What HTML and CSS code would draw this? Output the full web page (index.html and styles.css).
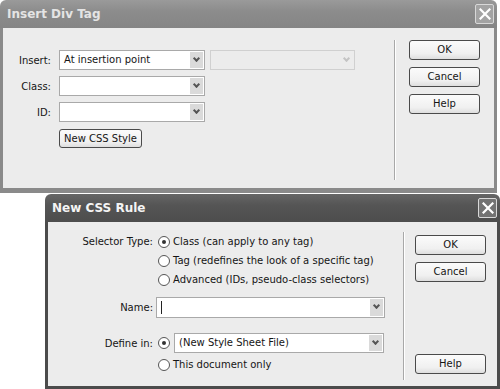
FILE: index.html
```html
<!DOCTYPE html>
<html>
<head>
    <title>Insert Div Tag</title>
    <link rel="stylesheet" href="styles.css">
</head>
<body>
    <div class="dialog" id="divDialog">
        <div class="titlebar">
            <span class="title">Insert Div Tag</span>
            <span class="close">
                <svg width="12" height="12" viewBox="0 0 12 12"><path d="M1.5 1.5 L10.5 10.5 M10.5 1.5 L1.5 10.5" stroke="#fff" stroke-width="2.2" stroke-linecap="square"/></svg>
            </span>
        </div>
        <div class="content">
            <div class="form">
                <div class="row">
                    <label>Insert:</label>
                    <div class="select">At insertion point<span class="arrow"></span></div>
                    <div class="select disabled"><span class="arrow"></span></div>
                </div>
                <div class="row">
                    <label>Class:</label>
                    <div class="select"><span class="arrow"></span></div>
                </div>
                <div class="row">
                    <label>ID:</label>
                    <div class="select"><span class="arrow"></span></div>
                </div>
                <div class="row">
                    <label></label>
                    <div class="button small">New CSS Style</div>
                </div>
            </div>
            <div class="separator"></div>
            <div class="buttons">
                <div class="button">OK</div>
                <div class="button">Cancel</div>
                <div class="button">Help</div>
            </div>
        </div>
    </div>

    <div class="dialog" id="ruleDialog">
        <div class="titlebar">
            <span class="title">New CSS Rule</span>
            <span class="close">
                <svg width="12" height="12" viewBox="0 0 12 12"><path d="M1.5 1.5 L10.5 10.5 M10.5 1.5 L1.5 10.5" stroke="#fff" stroke-width="2.2" stroke-linecap="square"/></svg>
            </span>
        </div>
        <div class="content">
            <div class="form">
                <label class="top">Selector Type:</label>
                <div class="radios">
                    <div class="radio-row"><span class="radio checked"></span>Class (can apply to any tag)</div>
                    <div class="radio-row"><span class="radio"></span>Tag (redefines the look of a specific tag)</div>
                    <div class="radio-row"><span class="radio"></span>Advanced (IDs, pseudo-class selectors)</div>
                </div>

                <label class="name-label">Name:</label>
                <div class="select name-input"><span class="caret"></span><span class="arrow"></span></div>

                <label class="define-label">Define in:</label>
                <div class="define-row">
                    <span class="radio checked"></span>
                    <div class="select define-select">(New Style Sheet File)<span class="arrow"></span></div>
                </div>

                <label></label>
                <div class="radio-row last"><span class="radio"></span>This document only</div>
            </div>
            <div class="separator"></div>
            <div class="buttons">
                <div class="button">OK</div>
                <div class="button">Cancel</div>
                <div class="button help">Help</div>
            </div>
        </div>
    </div>
</body>
</html>
```

FILE: styles.css
```css
body {
    margin: 0;
    width: 500px;
    height: 389px;
    overflow: hidden;
    position: relative;
    background: #fff;
    font-family: "DejaVu Sans", sans-serif;
    font-size: 10px;
    color: #151515;
}

/* windows */
.dialog {
    position: absolute;
    display: flex;
    flex-direction: column;
    box-sizing: border-box;
}

#divDialog {
    left: 0;
    top: 0;
    width: 497px;
    height: 193px;
}

#ruleDialog {
    left: 45px;
    top: 194px;
    width: 455px;
    height: 195px;
}

.titlebar {
    height: 28px;
    flex: none;
    display: flex;
    align-items: center;
    justify-content: space-between;
    padding: 0 7px;
    border-radius: 6px 6px 0 0;
}

#divDialog .titlebar {
    background: linear-gradient(#9a9a9a, #8c8c8c 40%, #858585);
}

#ruleDialog .titlebar {
    background: linear-gradient(#666, #555 40%, #4d4d4d);
}

.title {
    font-weight: bold;
    font-size: 12px;
    color: #e4e4e4;
}

#ruleDialog .title {
    color: #f4f4f4;
}

.close {
    width: 17px;
    height: 18px;
    display: flex;
    align-items: center;
    justify-content: center;
    border: 1px solid #d8d8d8;
    border-radius: 2px;
    margin-right: -4px;
}

#divDialog .close {
    background: #a3a3a3;
}

#ruleDialog .close {
    background: #737373;
}

.content {
    flex: 1;
    display: flex;
    background: #ececec;
    border: 3px solid #8a8a8a;
    border-top: 0;
}

#divDialog .content {
    border-bottom-width: 5px;
    padding: 12px 0 8px 0;
}

#ruleDialog .content {
    border-color: #4b4b4b;
    padding: 10px 0 6px 0;
}

.separator {
    width: 1px;
    border-left: 1px solid #a8a8a8;
    background: #fff;
}

.buttons {
    display: flex;
    flex-direction: column;
    gap: 7px;
}

#divDialog .buttons {
    margin-left: 13px;
}

#ruleDialog .buttons {
    margin-left: 10px;
    padding: 3px 0 6px 0;
}

.button {
    width: 69px;
    height: 18px;
    line-height: 18px;
    text-align: center;
    border: 1px solid #4a4a4a;
    border-radius: 3px;
    background: linear-gradient(#fbfbfb, #f0f0f0 70%, #dedede);
}

.button.small {
    width: auto;
    padding: 0 4px;
    height: 17px;
    line-height: 17px;
}

.help {
    margin-top: auto;
}

label {
    text-align: right;
}

/* select boxes */
.select {
    position: relative;
    box-sizing: border-box;
    height: 20px;
    line-height: 18px;
    padding-left: 4px;
    background: #fff;
    border: 1px solid #a9a9a9;
}

.arrow {
    position: absolute;
    right: 1px;
    top: 1px;
    bottom: 1px;
    width: 13px;
    background: #dadada;
}

.arrow::after {
    content: "";
    position: absolute;
    left: 4px;
    top: 4px;
    width: 3px;
    height: 3px;
    border-right: 2px solid #555;
    border-bottom: 2px solid #555;
    transform: rotate(45deg);
}

.select.disabled {
    background: #ececec;
    border-color: #d0d0d0;
}

.select.disabled .arrow {
    background: #ececec;
}

.select.disabled .arrow::after {
    border-color: #c4c4c4;
}

/* insert div form */
#divDialog .form {
    width: 391px;
    padding-top: 10px;
    display: flex;
    flex-direction: column;
    gap: 6px;
}

#divDialog .row {
    display: flex;
    align-items: center;
}

#divDialog .row label {
    width: 48px;
    margin-right: 8px;
}

#divDialog .row .select {
    width: 146px;
}

#divDialog .row .select.disabled {
    width: 145px;
    margin-left: 5px;
}

#divDialog .row .button {
    margin-top: 1px;
}

/* css rule form */
#ruleDialog .form {
    width: 355px;
    display: grid;
    grid-template-columns: 105px 228px;
    column-gap: 4px;
    align-items: center;
    align-content: start;
}

.top {
    align-self: start;
    line-height: 19px;
}

.radio-row {
    display: flex;
    align-items: center;
    height: 19px;
    gap: 3px;
    white-space: nowrap;
}

.radio {
    box-sizing: border-box;
    width: 12px;
    height: 12px;
    margin-left: 1px;
    border: 1px solid #555;
    border-radius: 50%;
    background: #fff;
    display: flex;
    align-items: center;
    justify-content: center;
    flex: none;
}

.radio.checked::after {
    content: "";
    width: 4px;
    height: 4px;
    border-radius: 50%;
    background: #333;
}

.name-label,
.name-input {
    margin-top: 8px;
}

.name-input {
    height: 21px;
    margin-left: -1px;
}

.caret {
    position: absolute;
    left: 4px;
    top: 3px;
    width: 1px;
    height: 13px;
    background: #222;
}

.define-label,
.define-row {
    margin-top: 15px;
}

.define-row {
    display: flex;
    align-items: center;
    gap: 4px;
}

.define-select {
    width: 210px;
}

.radio-row.last {
    margin-top: 2px;
}
```
